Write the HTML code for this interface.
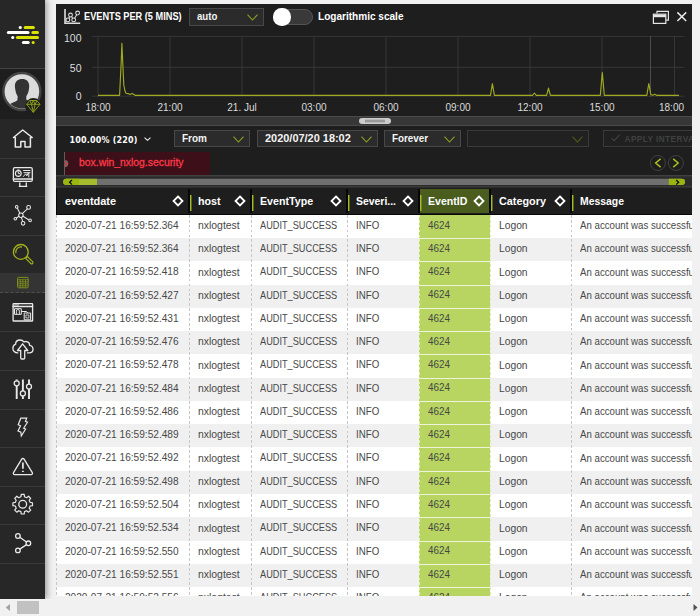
<!DOCTYPE html>
<html lang="en"><head><meta charset="utf-8"><title>Events</title>
<style>
*{box-sizing:border-box;margin:0;padding:0}
html,body{width:700px;height:616px;overflow:hidden;background:#f1f1f1;font-family:"Liberation Sans",sans-serif;}
body{position:relative}
.abs{position:absolute}
/* sidebar */
#side{position:absolute;left:0;top:0;width:45px;height:598.500px;background:#272727;box-shadow:2px 0 6px rgba(0,0,0,.36);z-index:5}
#side .sep{position:absolute;left:0;width:45px;height:1px;background:#3a3a3a}
#side .ic{position:absolute;left:0;width:45px}
#side svg{position:absolute;overflow:visible}
#avatar{position:absolute;left:0;top:68px;width:45px;height:51px;background:#1e1e1e;border-top:1px solid #444}
#sub{position:absolute;left:0;top:273px;width:45px;height:20px;background:#343434;border-bottom:1px dashed #4e4e4e}
/* panel */
#panel{position:absolute;left:56px;top:4px;width:636px;height:591.800px;background:#1e1e1e;overflow:hidden}
.t{display:inline-block;white-space:nowrap;transform-origin:0 50%}
.sel-box{position:absolute;height:17px;background:#2b2b2b;border:1px solid #484848}
.sel-box .t{position:absolute;left:7px;top:0px;color:#f4f4f4;font-size:10.900px;font-weight:bold;line-height:14.400px}
.sel-box svg{position:absolute;right:5px;top:4.800px}
/* table */
.tbl{position:absolute;left:56px;top:188.600px;width:636px;height:407.200px;overflow:hidden;background:#fff}
.thead{position:absolute;left:0;top:0;width:636px;height:26.150px;background:#1e1e1e;border-bottom:1.300px solid #080808;border-left:1px solid #080808}
.th{position:absolute;top:0;height:24.800px;border-left:2px solid #060606;color:#fff;font-weight:bold;font-size:11.4px;line-height:24.800px}
.th.first{border-left:none}
.th.sel{background:#4a5d1f}
.th .gb{position:absolute;left:0;top:6px;width:2px;height:16px;background:linear-gradient(to right,#a4bd25 50%,rgba(164,189,37,.45) 50%)}
.th.first .gb{display:none}
.th .t{position:absolute;left:8px;top:0}
.th.first .t{left:9px}
.th .dia{position:absolute;right:3.700px;top:6.200px}
.tbody{position:absolute;left:0;top:26.150px;width:636px;height:382px;overflow:hidden}
.tr{position:absolute;left:0;width:636px;height:23.27px;background:#fff}
.tr.alt{background:#f0f0f0}
.td{position:absolute;top:0;height:23.27px;padding-left:1px;color:#484848;font-size:11.100px;line-height:21px;overflow:hidden}
.td.sel{background:#b7d560;border-top:1.200px solid #eef4dc}
.td .t{position:absolute;left:9px;top:0}

.vl{position:absolute;top:0;width:1px;height:382px;background:repeating-linear-gradient(to bottom,#c6c6c6 0,#c6c6c6 2.700px,rgba(255,255,255,0) 2.700px,rgba(255,255,255,0) 4.900px)}
.vl.g{background:repeating-linear-gradient(to bottom,#dfeeb4 0,#dfeeb4 2.700px,rgba(255,255,255,0) 2.700px,rgba(255,255,255,0) 4.900px)}

.td .c1,.td .c5,.td .c6{font-size:11.600px;top:-.7px}
.td.sel .t{top:-1.200px}
.tr.r0 .td.sel{border-top-color:#b7d560}

#t_title{transform:scaleX(0.8360)}
#t_auto{transform:scaleX(0.8870)}
#t_log{transform:scaleX(0.8900)}
#t_from{transform:scaleX(0.9180)}
#t_date{transform:scaleX(1.0048)}
#t_forever{transform:scaleX(0.9011)}
#t_tag{transform:scaleX(0.8805)}
.h0{transform:scaleX(0.9589)}
.h1{transform:scaleX(0.9398)}
.h2{transform:scaleX(0.9372)}
.h3{transform:scaleX(0.9153)}
.h4{transform:scaleX(0.9288)}
.h5{transform:scaleX(0.9519)}
.h6{transform:scaleX(0.9143)}
.c0{transform:scaleX(0.9116)}
.c1{transform:scaleX(0.8986)}
.c2{transform:scaleX(0.8293)}
.c3{transform:scaleX(0.8755)}
.c4{transform:scaleX(0.8911)}
.c5{transform:scaleX(0.8868)}
.c6{transform:scaleX(0.8343)}
</style></head>
<body>
<div id="side">
<!-- logo -->
<svg style="left:0;top:20px" width="45" height="30" viewBox="0 20 45 30">
<g stroke-linecap="round" stroke-width="3" fill="none">
<line x1="20.2" y1="27.5" x2="20.3" y2="27.5" stroke="#fff"/>
<line x1="25.2" y1="27.5" x2="33.4" y2="27.5" stroke="#d9e200"/>
<line x1="8.3" y1="32.5" x2="28" y2="32.5" stroke="#fff"/>
<line x1="32.9" y1="32.5" x2="37.5" y2="32.5" stroke="#d9e200"/>
<line x1="12.7" y1="37.6" x2="12.8" y2="37.6" stroke="#fff"/>
<line x1="17.4" y1="37.6" x2="37.5" y2="37.6" stroke="#d9e200"/>
<line x1="23.4" y1="42.5" x2="28.2" y2="42.5" stroke="#fff"/>
<line x1="33.1" y1="42.5" x2="33.2" y2="42.5" stroke="#d9e200"/>
</g></svg>
<div id="avatar">
<svg style="left:0;top:-1px" width="45" height="51" viewBox="0 68 45 51">
<defs><clipPath id="avc"><circle cx="21.9" cy="91.5" r="17"/></clipPath></defs>
<circle cx="21.9" cy="91.5" r="18.5" fill="#dcdcdc" stroke="#444" stroke-width="2.4"/>
<g clip-path="url(#avc)" fill="#333">
<path d="M22.200 79 C26.400 79 29.200 81.600 29.200 85.800 C29.200 87.800 28.900 89.300 28.700 90.500 C28.400 93 27 95 26.300 96.200 L26.300 99.600 C28 101.600 35 102.500 38 106 L38 112 L5 112 L5 107.500 C7 104 14 103 17.400 100.200 L17.700 96.200 C16.900 95 15.700 93 15.500 90.500 C15.300 89.300 14.900 87.800 14.900 85.800 C14.900 81.600 18 79 22.200 79Z"/>
</g>
<circle cx="33.3" cy="106.300" r="8.200" fill="#1e1e1e"/>
<g fill="none" stroke="#8c9c18" stroke-width="1" stroke-linejoin="round" transform="translate(0 .5)">
<path d="M29.800 100 h7 l3.200 3.800 l-6.700 8 l-6.700 -8 z"/>
<path d="M26.600 103.800 h13.400 M29.800 100 l1.700 3.800 l1.800 8 l1.800 -8 l1.700 -3.800 M31.500 103.800 l1.800 -3.800 l1.800 3.800"/>
</g>
</svg>
</div>
<div class="sep" style="top:158px"></div>
<div class="sep" style="top:196px"></div>
<div class="sep" style="top:235px"></div>
<div id="sub"></div>
<div class="sep" style="top:331px"></div>
<div class="sep" style="top:370px"></div>
<div class="sep" style="top:409px"></div>
<div class="sep" style="top:447px"></div>
<div class="sep" style="top:486px"></div>
<div class="sep" style="top:524px"></div>
<div class="sep" style="top:563px"></div>
<!-- ICONS_START -->
<svg style="left:0;top:119px" width="45" height="479" viewBox="0 119 45 479">
<g fill="none" stroke="#e9e9e9" stroke-width="1.5" stroke-linejoin="round" stroke-linecap="round">
<!-- home -->
<path d="M13.5 137.500 L22.700 130 L32.200 137.500 H30.400 V146.900 H25 V141.400 H20.800 V146.900 H15.300 V137.500 Z"/>
<!-- dashboard monitor -->
<g stroke-width="1.300">
<rect x="13.400" y="167.700" width="18.900" height="13.700" rx="1.500"/>
<path d="M13.400 179 H32.300 M19.800 182.800 V186 M26.300 182.800 V186 M19.300 186.300 H26.800"/>
<circle cx="18.300" cy="173.500" r="2.900" stroke-width="1.100"/>
<path d="M18.300 171.800 V173.600 H19.800 M17.600 170 H19.200 M23.500 170.500 H30 M24 172.700 H30 M23.300 176.500 L25.800 173.800 L26.800 175.800 L28.300 173 M28.800 173 V177" stroke-width="1"/>
</g>
<!-- network -->
<g stroke-width="1.050">
<circle cx="20.900" cy="215.200" r="2.200"/>
<circle cx="16.700" cy="206.900" r="1.300"/><circle cx="28.600" cy="207.400" r="1.900"/><circle cx="15.300" cy="218.700" r="1.300"/><circle cx="30.100" cy="220.400" r="1.300"/><circle cx="23.100" cy="223.300" r="1.800"/>
<path d="M19.800 213 L17.400 208.300 M22.500 213.400 L27.200 209.100 M18.700 216.300 L16.600 218 M23.100 216.200 L28.600 219.700 M21.500 217.600 L22.600 221.300"/>
</g>
<!-- search -->
<g stroke="#a2b21c" stroke-width="1.300">
<circle cx="20.800" cy="251.900" r="7.400"/>
<path d="M15.800 252.500 a5 5 0 0 1 5.600 -5.500" />
<path d="M25.600 258.300 L27.300 256.500 L32.600 261.700 a1.200 1.200 0 0 1 -1.800 1.800 Z" stroke-width="1.100"/>
</g>
<!-- table small -->
<g stroke="#7f8f1b" stroke-width=".8" stroke-linecap="butt">
<rect x="17.500" y="277.400" width="10.700" height="10.400" rx="1" stroke-width="1"/>
<path d="M17.500 279.700 H28.200 M17.500 281.800 H28.200 M17.500 283.800 H28.200 M17.500 285.800 H28.200 M20.300 279.700 V287.800 M22.900 279.700 V287.800 M25.500 279.700 V287.800"/>
</g>
<!-- window -->
<g stroke-width="1.300">
<rect x="13.100" y="303.700" width="19.500" height="17.300" rx=".6"/>
<path d="M13.100 306.500 H32.600" />
<path d="M14.500 305 H18.500" stroke-width=".9"/>
<rect x="14.900" y="308.700" width="6.400" height="5.600" stroke-width="1"/>
<path d="M16.400 314 V311 a1.500 1.500 0 0 1 3 0 V314" stroke-width=".9"/>
<path d="M21.500 311.500 H26.500 L27.500 312.600" stroke-width="1"/>
<rect x="24.600" y="313" width="6" height="6.800" stroke-width="1"/>
<rect x="26.300" y="315" width="2.600" height="3" stroke-width=".8"/>
</g>
<!-- cloud upload -->
<g stroke-width="1.300">
<path d="M17.800 352.900 C14.600 353 12.900 350.700 12.900 348.400 C12.900 346.300 14 344.800 15.600 344.200 C15.600 341.600 17.600 340 20 340 C21.800 340 23.200 340.800 24 342 C24.800 341.500 25.800 341.400 26.700 341.600 C28.700 342.100 29.700 343.700 29.600 345.300 C31.700 345.600 33 347.200 33 349.200 C33 351.400 31.400 352.900 29 352.900 L27.500 352.900"/>
<path d="M22.600 343.800 L27.800 350.500 H24.700 V358 a1 1 0 0 1 -1 1 h-2 a1 1 0 0 1 -1 -1 V350.500 H17.500 Z"/>
</g>
<!-- sliders -->
<g stroke-width="1.900" stroke-linecap="butt">
<path d="M16.700 379.400 V398.900 M22.900 379.400 V398.900 M29 379.400 V398.900"/>
<g fill="#272727" stroke-width="1.300"><circle cx="16.700" cy="383.300" r="2.500"/><circle cx="22.900" cy="393.400" r="2.500"/><circle cx="29" cy="386.600" r="2.500"/></g>
</g>
<!-- bolt -->
<path d="M20.800 418.200 H26.700 L25.400 421.500 L27.500 422.200 L23.700 428.300 L25.600 429.100 L21.300 436 L20.900 432.200 L18 431 L20.500 425.700 L18.200 424.700 Z" stroke-width="1.200" stroke-linejoin="miter"/>
<!-- alert -->
<g stroke-width="1.300">
<path d="M21.700 459.200 a1.400 1.400 0 0 1 2.400 0 L32.300 472.600 a1.400 1.400 0 0 1 -1.200 2.100 H14.700 a1.400 1.400 0 0 1 -1.200 -2.100 Z"/>
<path d="M22.900 462.500 V468.800" stroke-width="1.700" stroke-linecap="butt"/>
<path d="M22 471.300 H23.800" stroke-width="1.200" stroke-linecap="butt"/>
</g>
<!-- gear -->
<path d="M20.89 496.82 L21.22 494.41 L24.18 494.41 L24.51 496.82 L26.64 497.70 L28.58 496.23 L30.67 498.32 L29.20 500.26 L30.08 502.39 L32.49 502.72 L32.49 505.68 L30.08 506.01 L29.20 508.14 L30.67 510.08 L28.58 512.17 L26.64 510.70 L24.51 511.58 L24.18 513.99 L21.22 513.99 L20.89 511.58 L18.76 510.70 L16.82 512.17 L14.73 510.08 L16.20 508.14 L15.32 506.01 L12.91 505.68 L12.91 502.72 L15.32 502.39 L16.20 500.26 L14.73 498.32 L16.82 496.23 L18.76 497.70Z" stroke-width="1.200"/>
<circle cx="22.700" cy="504.200" r="3.900" stroke-width="1.300"/>
<!-- share -->
<g stroke-width="1.300">
<circle cx="17.900" cy="536" r="2.300"/><circle cx="28.400" cy="543.300" r="2.300"/><circle cx="17.900" cy="550.400" r="2.300"/>
<path d="M19.800 537.300 L26.500 542 M26.500 544.600 L19.800 549.100"/>
</g>
</g></svg>
<!-- ICONS_END -->
</div>
<div id="panel">
<svg class="abs" style="left:0;top:0" width="636" height="184" viewBox="56 4 636 184">
<!-- title icon -->
<g fill="none" stroke="#dedede" stroke-width="1.050">
<path d="M65 9 V23.250 H80.200" stroke-width="1.600"/>
<circle cx="67.900" cy="19.900" r="1.900"/><circle cx="70.500" cy="15" r="1.900"/><circle cx="73.700" cy="19.900" r="1.900"/><circle cx="77.600" cy="13" r="1.900"/>
<path d="M68.800 18.200 L69.600 16.700 M71.500 16.600 L72.700 18.300 M74.600 18.200 L76.700 14.700"/>
</g>
<!-- grid -->
<g stroke="#363636" stroke-width="1">
<path d="M92 36.400 H684.500 M92 67.300 H684.500 M92 96.200 H684.500"/>
<path d="M98 36 V97 M170 36 V97 M242 36 V97 M314 36 V97 M386 36 V97 M458 36 V97 M530 36 V97 M602 36 V97 M674.500 36 V97"/>
</g>
<path d="M650.500 36 V97" stroke="#4c4c4c" stroke-width="1"/>
<!-- series -->
<path fill="none" stroke="#a0aa20" stroke-width="1.150" stroke-linejoin="round" d="M98 95.300 H119.600 L121.300 60 L121.900 43.200 L122.700 62 L123.800 85 L125 91 L126 93.300 L128 93.600 L130 94.600 L132.100 93.500 L133.500 94.300 L135 95.300 H490.500 L492.400 83.700 L494.400 95.300 H532.500 L534.400 93 L536.300 95.300 H546.600 L548.500 88.100 L550.400 95.300 H600.300 L602.300 72.500 L604.300 95.300 H646.800 L648.800 83.700 L650.800 94.500 L652.800 95.300 L654.700 94.300 L656.600 95.300 H679"/>
<!-- axis labels -->
<g font-family="Liberation Sans, sans-serif" font-size="10.500" fill="#dcdcdc">
<g text-anchor="end"><text x="81.500" y="41.600">100</text><text x="81.500" y="71.600">50</text><text x="81.500" y="100.200">0</text></g>
<g text-anchor="middle" font-size="10"><text x="98" y="111.100">18:00</text><text x="170" y="111.100">21:00</text><text x="242" y="111.100">21. Jul</text><text x="314" y="111.100">03:00</text><text x="386" y="111.100">06:00</text><text x="458" y="111.100">09:00</text><text x="530" y="111.100">12:00</text><text x="602" y="111.100">15:00</text><text x="671.500" y="111.100">18:00</text></g>
</g>
<!-- window + close icons -->
<g fill="none" stroke="#e6e6e6" stroke-width="1.200">
<path d="M657 13.500 V11.400 H668.400 V20.200 H666.200"/>
<rect x="653.400" y="14.200" width="12.400" height="9.200"/>
<path d="M653.400 16 H665.800" stroke-width="2.400"/>
<path d="M677.400 12.400 L686.200 21 M686.200 12.400 L677.400 21" stroke-width="1.500"/>
</g>
<!-- splitter -->
<rect x="56" y="116" width="636" height="10" fill="#373737"/>
<rect x="56" y="116" width="636" height="1" fill="#4a4a4a"/>
<rect x="56" y="125" width="636" height="1" fill="#4a4a4a"/>
<rect x="359" y="118" width="32" height="6" rx="3" fill="#cdcdcd"/>
<rect x="365" y="119.600" width="20" height="2.800" fill="#9a9a9a"/>
<!-- tag row -->
<rect x="56" y="175.200" width="636" height="12.600" fill="#2b2b2b"/>
<rect x="56" y="175.200" width="636" height="1.100" fill="#484848"/>
<rect x="56" y="186.500" width="636" height="1.200" fill="#484848"/>
<rect x="56" y="187.700" width="636" height="1.300" fill="#0a0a0a"/>
<rect x="64.500" y="152" width="145.500" height="23" fill="#3d1019"/>
<rect x="64" y="152" width="1" height="23" fill="#5c5c5c"/>
<path d="M64.800 160 a3.600 3.600 0 0 1 0 7.200z" fill="#666"/>
<path d="M64.300 161.400 L66.800 163.600 L64.300 165.800" fill="none" stroke="#f0323e" stroke-width="1.100"/>
<!-- nav circles -->
<g fill="none" stroke="#404040" stroke-width="1"><circle cx="657.900" cy="163" r="7.500"/><circle cx="675.900" cy="163" r="7.500"/></g>
<g fill="none" stroke="#aec220" stroke-width="1.400"><path d="M660.600 158.900 L655.600 163 L660.600 167.100"/><path d="M673.200 158.900 L678.200 163 L673.200 167.100"/></g>
<!-- h scroll -->
<rect x="63.300" y="178.700" width="621.700" height="6.300" rx="3.100" fill="#707070"/>
<path d="M66.400 178.700 H97 V185 H66.400 a3.100 3.100 0 0 1 0 -6.300z" fill="#a7bb2f"/>
<path d="M66.400 178.700 H79 V185 H66.400 a3.100 3.100 0 0 1 0 -6.300z" fill="#9bb50f"/>
<path d="M72 180 L69.600 182.300 L72 184.600" fill="none" stroke="#0c0c0c" stroke-width="1.300"/>
<path d="M668.800 178.700 H681.900 a3.100 3.100 0 0 1 0 6.300 H668.800z" fill="#9bb50f"/>
<path d="M676.200 180 L678.600 182.300 L676.200 184.600" fill="none" stroke="#0c0c0c" stroke-width="1.300"/>
</svg>
<!-- title -->
<span class="t abs" id="t_title" style="left:28px;top:5px;font-size:11px;font-weight:bold;color:#fff;line-height:14px">EVENTS PER (5 MINS)</span>
<div class="sel-box" style="left:133px;top:4px;width:75px;height:18px"><span class="t" id="t_auto">auto</span><svg width="11" height="7" viewBox="0 0 11 7"><path d="M.5 .6 L5.500 6 L10.500 .6" fill="none" stroke="#8fa01f" stroke-width="1.100"/></svg></div>
<div class="abs" style="left:217px;top:5.200px;width:40px;height:15.600px;border-radius:8px;background:#393939;border:1px solid #555"></div>
<div class="abs" style="left:216.500px;top:4.400px;width:18.500px;height:17.200px;border-radius:8.500px;background:#fff"></div>
<span class="t abs" id="t_log" style="left:261.500px;top:5px;font-size:11.3px;font-weight:bold;color:#fff;line-height:14px">Logarithmic scale</span>
<!-- filter row -->
<span class="abs" id="t_pct" style="left:13.400px;top:131px;font-family:'DejaVu Sans','Liberation Sans',sans-serif;font-size:8px;font-weight:bold;color:#fff;line-height:11px;letter-spacing:.2px;white-space:nowrap">100.00% (220)</span>
<svg class="abs" style="left:88px;top:133px" width="7" height="4.400" viewBox="0 0 8 5"><path d="M.6 .6 L4 3.800 L7.400 .6" fill="none" stroke="#eee" stroke-width="1.200"/></svg>
<div class="sel-box" style="left:117.500px;top:126px;width:76px;height:17px"><span class="t" id="t_from">From</span><svg width="11" height="7" viewBox="0 0 11 7"><path d="M.5 .6 L5.500 6 L10.500 .6" fill="none" stroke="#8fa01f" stroke-width="1.100"/></svg></div>
<div class="sel-box" style="left:200.500px;top:126px;width:121px;height:17px"><span class="t" id="t_date">2020/07/20 18:02</span><svg width="11" height="7" viewBox="0 0 11 7"><path d="M.5 .6 L5.500 6 L10.500 .6" fill="none" stroke="#8fa01f" stroke-width="1.100"/></svg></div>
<div class="sel-box" style="left:328px;top:126px;width:76.500px;height:17px"><span class="t" id="t_forever">Forever</span><svg width="11" height="7" viewBox="0 0 11 7"><path d="M.5 .6 L5.500 6 L10.500 .6" fill="none" stroke="#8fa01f" stroke-width="1.100"/></svg></div>
<div class="sel-box" style="left:411px;top:126px;width:122px;height:17px;background:#212121;border-color:#3a3a3a"><svg width="11" height="7" viewBox="0 0 11 7"><path d="M.5 .6 L5.500 6 L10.500 .6" fill="none" stroke="#4a5316" stroke-width="1.300"/></svg></div>
<div class="abs" style="left:547px;top:126.400px;width:110px;height:17px;border:1px solid #3a3a3a;background:#202020"></div>
<svg class="abs" style="left:555.200px;top:129.600px" width="9" height="8" viewBox="0 0 9 8"><path d="M.6 4.200 L3.200 6.800 L8.400 .8" fill="none" stroke="#444" stroke-width="1.100"/></svg>
<span class="abs" id="t_apply" style="left:568.600px;top:129.500px;font-size:8.200px;font-weight:bold;color:#404040;line-height:11px;letter-spacing:.45px;white-space:nowrap">APPLY INTERVAL</span>
<span class="t abs" id="t_tag" style="left:23px;top:150.500px;font-size:11.8px;color:#ff3a48;-webkit-text-stroke:.3px #ff3a48;line-height:14px">box.win_nxlog.security</span>
</div>
<div class="tbl">
<div class="thead">
<div class="th first" style="left:-1px;width:132px"><i class="gb"></i><span class="t h0">eventdate</span><svg class="dia" width="12" height="12" viewBox="0 0 12 12"><path d="M6 1.500 L10.500 6 L6 10.500 L1.500 6 Z" fill="none" stroke="#fff" stroke-width="1.800"/></svg></div>
<div class="th" style="left:131px;width:62px"><i class="gb"></i><span class="t h1">host</span><svg class="dia" width="12" height="12" viewBox="0 0 12 12"><path d="M6 1.500 L10.500 6 L6 10.500 L1.500 6 Z" fill="none" stroke="#fff" stroke-width="1.800"/></svg></div>
<div class="th" style="left:193px;width:96px"><i class="gb"></i><span class="t h2">EventType</span><svg class="dia" width="12" height="12" viewBox="0 0 12 12"><path d="M6 1.500 L10.500 6 L6 10.500 L1.500 6 Z" fill="none" stroke="#fff" stroke-width="1.800"/></svg></div>
<div class="th" style="left:289px;width:72px"><i class="gb"></i><span class="t h3">Severi...</span><svg class="dia" width="12" height="12" viewBox="0 0 12 12"><path d="M6 1.500 L10.500 6 L6 10.500 L1.500 6 Z" fill="none" stroke="#fff" stroke-width="1.800"/></svg></div>
<div class="th sel" style="left:361px;width:71px"><i class="gb"></i><span class="t h4">EventID</span><svg class="dia" width="12" height="12" viewBox="0 0 12 12"><path d="M6 1.500 L10.500 6 L6 10.500 L1.500 6 Z" fill="none" stroke="#fff" stroke-width="1.800"/></svg></div>
<div class="th" style="left:432px;width:81px"><i class="gb"></i><span class="t h5">Category</span><svg class="dia" width="12" height="12" viewBox="0 0 12 12"><path d="M6 1.500 L10.500 6 L6 10.500 L1.500 6 Z" fill="none" stroke="#fff" stroke-width="1.800"/></svg></div>
<div class="th" style="left:513px;width:122px"><i class="gb"></i><span class="t h6">Message</span></div>
</div>
<div class="tbody">
<div class="tr r0" style="top:0.00px"><div class="td first" style="left:0px;width:133px"><span class="t c0">2020-07-21 16:59:52.364</span></div><div class="td" style="left:133px;width:62px"><span class="t c1">nxlogtest</span></div><div class="td" style="left:195px;width:96px"><span class="t c2">AUDIT_SUCCESS</span></div><div class="td" style="left:291px;width:72px"><span class="t c3">INFO</span></div><div class="td sel" style="left:362.6px;width:71.4px"><span class="t c4">4624</span></div><div class="td" style="left:434px;width:81px"><span class="t c5">Logon</span></div><div class="td" style="left:515px;width:121px"><span class="t c6">An account was successfully logged on.</span></div></div>
<div class="tr alt" style="top:23.27px"><div class="td first" style="left:0px;width:133px"><span class="t c0">2020-07-21 16:59:52.364</span></div><div class="td" style="left:133px;width:62px"><span class="t c1">nxlogtest</span></div><div class="td" style="left:195px;width:96px"><span class="t c2">AUDIT_SUCCESS</span></div><div class="td" style="left:291px;width:72px"><span class="t c3">INFO</span></div><div class="td sel" style="left:362.6px;width:71.4px"><span class="t c4">4624</span></div><div class="td" style="left:434px;width:81px"><span class="t c5">Logon</span></div><div class="td" style="left:515px;width:121px"><span class="t c6">An account was successfully logged on.</span></div></div>
<div class="tr" style="top:46.54px"><div class="td first" style="left:0px;width:133px"><span class="t c0">2020-07-21 16:59:52.418</span></div><div class="td" style="left:133px;width:62px"><span class="t c1">nxlogtest</span></div><div class="td" style="left:195px;width:96px"><span class="t c2">AUDIT_SUCCESS</span></div><div class="td" style="left:291px;width:72px"><span class="t c3">INFO</span></div><div class="td sel" style="left:362.6px;width:71.4px"><span class="t c4">4624</span></div><div class="td" style="left:434px;width:81px"><span class="t c5">Logon</span></div><div class="td" style="left:515px;width:121px"><span class="t c6">An account was successfully logged on.</span></div></div>
<div class="tr alt" style="top:69.81px"><div class="td first" style="left:0px;width:133px"><span class="t c0">2020-07-21 16:59:52.427</span></div><div class="td" style="left:133px;width:62px"><span class="t c1">nxlogtest</span></div><div class="td" style="left:195px;width:96px"><span class="t c2">AUDIT_SUCCESS</span></div><div class="td" style="left:291px;width:72px"><span class="t c3">INFO</span></div><div class="td sel" style="left:362.6px;width:71.4px"><span class="t c4">4624</span></div><div class="td" style="left:434px;width:81px"><span class="t c5">Logon</span></div><div class="td" style="left:515px;width:121px"><span class="t c6">An account was successfully logged on.</span></div></div>
<div class="tr" style="top:93.08px"><div class="td first" style="left:0px;width:133px"><span class="t c0">2020-07-21 16:59:52.431</span></div><div class="td" style="left:133px;width:62px"><span class="t c1">nxlogtest</span></div><div class="td" style="left:195px;width:96px"><span class="t c2">AUDIT_SUCCESS</span></div><div class="td" style="left:291px;width:72px"><span class="t c3">INFO</span></div><div class="td sel" style="left:362.6px;width:71.4px"><span class="t c4">4624</span></div><div class="td" style="left:434px;width:81px"><span class="t c5">Logon</span></div><div class="td" style="left:515px;width:121px"><span class="t c6">An account was successfully logged on.</span></div></div>
<div class="tr alt" style="top:116.35px"><div class="td first" style="left:0px;width:133px"><span class="t c0">2020-07-21 16:59:52.476</span></div><div class="td" style="left:133px;width:62px"><span class="t c1">nxlogtest</span></div><div class="td" style="left:195px;width:96px"><span class="t c2">AUDIT_SUCCESS</span></div><div class="td" style="left:291px;width:72px"><span class="t c3">INFO</span></div><div class="td sel" style="left:362.6px;width:71.4px"><span class="t c4">4624</span></div><div class="td" style="left:434px;width:81px"><span class="t c5">Logon</span></div><div class="td" style="left:515px;width:121px"><span class="t c6">An account was successfully logged on.</span></div></div>
<div class="tr" style="top:139.62px"><div class="td first" style="left:0px;width:133px"><span class="t c0">2020-07-21 16:59:52.478</span></div><div class="td" style="left:133px;width:62px"><span class="t c1">nxlogtest</span></div><div class="td" style="left:195px;width:96px"><span class="t c2">AUDIT_SUCCESS</span></div><div class="td" style="left:291px;width:72px"><span class="t c3">INFO</span></div><div class="td sel" style="left:362.6px;width:71.4px"><span class="t c4">4624</span></div><div class="td" style="left:434px;width:81px"><span class="t c5">Logon</span></div><div class="td" style="left:515px;width:121px"><span class="t c6">An account was successfully logged on.</span></div></div>
<div class="tr alt" style="top:162.89px"><div class="td first" style="left:0px;width:133px"><span class="t c0">2020-07-21 16:59:52.484</span></div><div class="td" style="left:133px;width:62px"><span class="t c1">nxlogtest</span></div><div class="td" style="left:195px;width:96px"><span class="t c2">AUDIT_SUCCESS</span></div><div class="td" style="left:291px;width:72px"><span class="t c3">INFO</span></div><div class="td sel" style="left:362.6px;width:71.4px"><span class="t c4">4624</span></div><div class="td" style="left:434px;width:81px"><span class="t c5">Logon</span></div><div class="td" style="left:515px;width:121px"><span class="t c6">An account was successfully logged on.</span></div></div>
<div class="tr" style="top:186.16px"><div class="td first" style="left:0px;width:133px"><span class="t c0">2020-07-21 16:59:52.486</span></div><div class="td" style="left:133px;width:62px"><span class="t c1">nxlogtest</span></div><div class="td" style="left:195px;width:96px"><span class="t c2">AUDIT_SUCCESS</span></div><div class="td" style="left:291px;width:72px"><span class="t c3">INFO</span></div><div class="td sel" style="left:362.6px;width:71.4px"><span class="t c4">4624</span></div><div class="td" style="left:434px;width:81px"><span class="t c5">Logon</span></div><div class="td" style="left:515px;width:121px"><span class="t c6">An account was successfully logged on.</span></div></div>
<div class="tr alt" style="top:209.43px"><div class="td first" style="left:0px;width:133px"><span class="t c0">2020-07-21 16:59:52.489</span></div><div class="td" style="left:133px;width:62px"><span class="t c1">nxlogtest</span></div><div class="td" style="left:195px;width:96px"><span class="t c2">AUDIT_SUCCESS</span></div><div class="td" style="left:291px;width:72px"><span class="t c3">INFO</span></div><div class="td sel" style="left:362.6px;width:71.4px"><span class="t c4">4624</span></div><div class="td" style="left:434px;width:81px"><span class="t c5">Logon</span></div><div class="td" style="left:515px;width:121px"><span class="t c6">An account was successfully logged on.</span></div></div>
<div class="tr" style="top:232.70px"><div class="td first" style="left:0px;width:133px"><span class="t c0">2020-07-21 16:59:52.492</span></div><div class="td" style="left:133px;width:62px"><span class="t c1">nxlogtest</span></div><div class="td" style="left:195px;width:96px"><span class="t c2">AUDIT_SUCCESS</span></div><div class="td" style="left:291px;width:72px"><span class="t c3">INFO</span></div><div class="td sel" style="left:362.6px;width:71.4px"><span class="t c4">4624</span></div><div class="td" style="left:434px;width:81px"><span class="t c5">Logon</span></div><div class="td" style="left:515px;width:121px"><span class="t c6">An account was successfully logged on.</span></div></div>
<div class="tr alt" style="top:255.97px"><div class="td first" style="left:0px;width:133px"><span class="t c0">2020-07-21 16:59:52.498</span></div><div class="td" style="left:133px;width:62px"><span class="t c1">nxlogtest</span></div><div class="td" style="left:195px;width:96px"><span class="t c2">AUDIT_SUCCESS</span></div><div class="td" style="left:291px;width:72px"><span class="t c3">INFO</span></div><div class="td sel" style="left:362.6px;width:71.4px"><span class="t c4">4624</span></div><div class="td" style="left:434px;width:81px"><span class="t c5">Logon</span></div><div class="td" style="left:515px;width:121px"><span class="t c6">An account was successfully logged on.</span></div></div>
<div class="tr" style="top:279.24px"><div class="td first" style="left:0px;width:133px"><span class="t c0">2020-07-21 16:59:52.504</span></div><div class="td" style="left:133px;width:62px"><span class="t c1">nxlogtest</span></div><div class="td" style="left:195px;width:96px"><span class="t c2">AUDIT_SUCCESS</span></div><div class="td" style="left:291px;width:72px"><span class="t c3">INFO</span></div><div class="td sel" style="left:362.6px;width:71.4px"><span class="t c4">4624</span></div><div class="td" style="left:434px;width:81px"><span class="t c5">Logon</span></div><div class="td" style="left:515px;width:121px"><span class="t c6">An account was successfully logged on.</span></div></div>
<div class="tr alt" style="top:302.51px"><div class="td first" style="left:0px;width:133px"><span class="t c0">2020-07-21 16:59:52.534</span></div><div class="td" style="left:133px;width:62px"><span class="t c1">nxlogtest</span></div><div class="td" style="left:195px;width:96px"><span class="t c2">AUDIT_SUCCESS</span></div><div class="td" style="left:291px;width:72px"><span class="t c3">INFO</span></div><div class="td sel" style="left:362.6px;width:71.4px"><span class="t c4">4624</span></div><div class="td" style="left:434px;width:81px"><span class="t c5">Logon</span></div><div class="td" style="left:515px;width:121px"><span class="t c6">An account was successfully logged on.</span></div></div>
<div class="tr" style="top:325.78px"><div class="td first" style="left:0px;width:133px"><span class="t c0">2020-07-21 16:59:52.550</span></div><div class="td" style="left:133px;width:62px"><span class="t c1">nxlogtest</span></div><div class="td" style="left:195px;width:96px"><span class="t c2">AUDIT_SUCCESS</span></div><div class="td" style="left:291px;width:72px"><span class="t c3">INFO</span></div><div class="td sel" style="left:362.6px;width:71.4px"><span class="t c4">4624</span></div><div class="td" style="left:434px;width:81px"><span class="t c5">Logon</span></div><div class="td" style="left:515px;width:121px"><span class="t c6">An account was successfully logged on.</span></div></div>
<div class="tr alt" style="top:349.05px"><div class="td first" style="left:0px;width:133px"><span class="t c0">2020-07-21 16:59:52.551</span></div><div class="td" style="left:133px;width:62px"><span class="t c1">nxlogtest</span></div><div class="td" style="left:195px;width:96px"><span class="t c2">AUDIT_SUCCESS</span></div><div class="td" style="left:291px;width:72px"><span class="t c3">INFO</span></div><div class="td sel" style="left:362.6px;width:71.4px"><span class="t c4">4624</span></div><div class="td" style="left:434px;width:81px"><span class="t c5">Logon</span></div><div class="td" style="left:515px;width:121px"><span class="t c6">An account was successfully logged on.</span></div></div>
<div class="tr" style="top:372.32px"><div class="td first" style="left:0px;width:133px"><span class="t c0">2020-07-21 16:59:52.556</span></div><div class="td" style="left:133px;width:62px"><span class="t c1">nxlogtest</span></div><div class="td" style="left:195px;width:96px"><span class="t c2">AUDIT_SUCCESS</span></div><div class="td" style="left:291px;width:72px"><span class="t c3">INFO</span></div><div class="td sel" style="left:362.6px;width:71.4px"><span class="t c4">4624</span></div><div class="td" style="left:434px;width:81px"><span class="t c5">Logon</span></div><div class="td" style="left:515px;width:121px"><span class="t c6">An account was successfully logged on.</span></div></div>
<i class="vl" style="left:0.4px"></i><i class="vl" style="left:133px"></i><i class="vl" style="left:195px"></i><i class="vl" style="left:291px"></i><i class="vl g" style="left:363px"></i><i class="vl g" style="left:434px"></i><i class="vl" style="left:515px"></i>
</div>
</div>
<div id="hscroll" style="position:absolute;left:0;top:599px;width:700px;height:17px;background:#f1f1f1;z-index:6">
<svg style="position:absolute;left:0;top:0" width="700" height="17" viewBox="0 0 700 17">
<path d="M5.700 8.500 L10 5 L10 12 Z" fill="#a3a3a3"/>
<rect x="17" y="2" width="22" height="13" fill="#c1c1c1"/>
<path d="M697.500 8.500 L693.500 5 L693.500 12 Z" fill="#505050"/>
</svg>
</div>
</body></html>
